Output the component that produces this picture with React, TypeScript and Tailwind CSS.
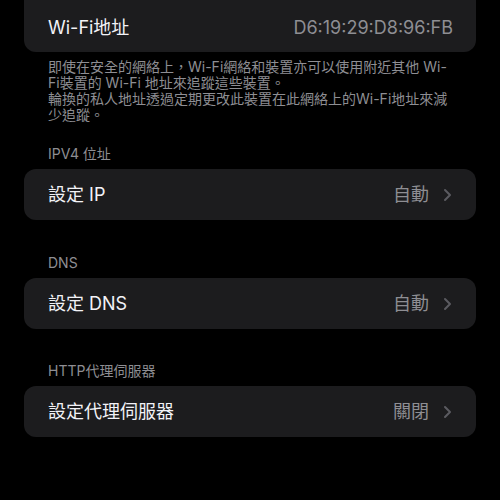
const font = { fontFamily: 'Inter, "Noto Sans CJK TC", sans-serif' };

function Chevron() {
  return (
    <svg width="9" height="14" viewBox="0 0 9 14" className="ml-[14px]">
      <path d="M2 2l5 5-5 5" fill="none" stroke="#5b5b60" strokeWidth="2" strokeLinecap="round" strokeLinejoin="round" />
    </svg>
  );
}

function Row({ title, value }: { title: string; value: string }) {
  return (
    <div className="mx-6 h-[51px] rounded-[12px] bg-[#1c1c1e] flex items-center pl-6 pr-[24px]">
      <span className="text-[18px] text-[#f2f2f7] flex-1">{title}</span>
      <span className="text-[18px] text-[#8e8e93]">{value}</span>
      <Chevron />
    </div>
  );
}

function Header({ text }: { text: string }) {
  return <div className="px-12 text-[14px] text-[#8e8e93] leading-[18px] mb-[6px]">{text}</div>;
}

export default function App() {
  return (
    <div className="w-[500px] h-[500px] bg-black overflow-hidden" style={font}>
      <div className="mx-6 h-[52px] rounded-b-[12px] bg-[#1c1c1e] flex items-center justify-between pl-6 pr-[23px] pt-[2px]">
        <span className="text-[18px] text-[#f2f2f7]">Wi-Fi地址</span>
        <span className="text-[18px] text-[#8e8e93]">D6:19:29:D8:96:FB</span>
      </div>

      <div className="px-12 pt-[7px] text-[14px] leading-[16px] text-[#8e8e93]">
        <p>即使在安全的網絡上，Wi-Fi網絡和裝置亦可以使用附近其他 Wi-Fi裝置的 Wi-Fi 地址來追蹤這些裝置。</p>
        <p>輪換的私人地址透過定期更改此裝置在此網絡上的Wi-Fi地址來減少追蹤。</p>
      </div>

      <div className="pt-[22px]">
        <Header text="IPV4 位址" />
        <Row title="設定 IP" value="自動" />
      </div>

      <div className="pt-[34px]">
        <Header text="DNS" />
        <Row title="設定 DNS" value="自動" />
      </div>

      <div className="pt-[33px]">
        <Header text="HTTP代理伺服器" />
        <Row title="設定代理伺服器" value="關閉" />
      </div>
    </div>
  );
}
